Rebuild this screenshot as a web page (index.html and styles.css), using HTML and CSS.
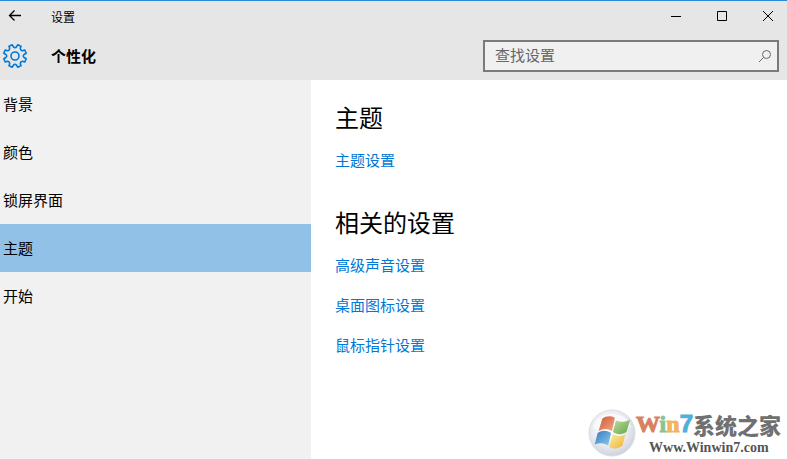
FILE: index.html
```html
<!DOCTYPE html>
<html lang="zh-CN">
<head>
<meta charset="utf-8">
<title>设置</title>
<link rel="stylesheet" href="styles.css">
</head>
<body>
<header class="top">
  <div class="titlebar">
    <button class="back" type="button" aria-label="返回">
      <svg width="14" height="12" viewBox="0 0 14 12"><path d="M13 5.5H1.5M6.5 .5L1.5 5.5L6.5 10.5"/></svg>
    </button>
    <span class="window-title">设置</span>
    <div class="controls">
      <button type="button" aria-label="最小化"><svg width="12" height="12" viewBox="0 0 12 12"><path d="M1 6.5H11"/></svg></button>
      <button type="button" aria-label="最大化"><svg width="12" height="12" viewBox="0 0 12 12"><path d="M1.5 1.5H10.5V10.5H1.5Z"/></svg></button>
      <button type="button" aria-label="关闭"><svg width="12" height="12" viewBox="0 0 12 12"><path d="M1 1L11 11M11 1L1 11"/></svg></button>
    </div>
  </div>
  <div class="page-header">
    <svg class="gear" width="26" height="26" viewBox="-13 -13 26 26">
      <path d="M1.5-9.1L2.7-11.2L6-9.8L5.3-7.5Q5.5-5.5 7.5-5.3L9.8-6L11.2-2.7L9.1-1.5Q7.4 0 9.1 1.5L11.2 2.7L9.8 6L7.5 5.3Q5.5 5.5 5.3 7.5L6 9.8L2.7 11.2L1.5 9.1Q0 7.4-1.5 9.1L-2.7 11.2L-6 9.8L-5.3 7.5Q-5.5 5.5-7.5 5.3L-9.8 6L-11.2 2.7L-9.1 1.5Q-7.4 0-9.1-1.5L-11.2-2.7L-9.8-6L-7.5-5.3Q-5.5-5.5-5.3-7.5L-6-9.8L-2.7-11.2L-1.5-9.1Q0-7.4 1.5-9.1Z"/>
      <circle r="4"/>
    </svg>
    <h1>个性化</h1>
    <form class="search">
      <input type="text" placeholder="查找设置" aria-label="查找设置">
      <button type="button" aria-label="搜索"><svg width="14" height="14" viewBox="0 0 14 14"><circle cx="8.5" cy="5.5" r="4"/><path d="M5.5 8.5L1 13"/></svg></button>
    </form>
  </div>
</header>
<div class="body">
  <nav class="sidebar">
    <a href="#">背景</a>
    <a href="#">颜色</a>
    <a href="#">锁屏界面</a>
    <a href="#" class="active" aria-current="page">主题</a>
    <a href="#">开始</a>
  </nav>
  <main class="content">
    <section>
      <h2>主题</h2>
      <a href="#">主题设置</a>
    </section>
    <section>
      <h2>相关的设置</h2>
      <a href="#">高级声音设置</a>
      <a href="#">桌面图标设置</a>
      <a href="#">鼠标指针设置</a>
    </section>
  </main>
</div>
<div class="watermark">
  <svg width="48" height="48" viewBox="0 0 50 50">
    <defs>
      <radialGradient id="orb" cx=".45" cy=".4" r=".6"><stop offset="0" stop-color="#fff"/><stop offset=".6" stop-color="#eceef2"/><stop offset="1" stop-color="#ced3dc"/></radialGradient>
      <linearGradient id="red" x2="1" y2="1"><stop offset="0" stop-color="#cf5838"/><stop offset="1" stop-color="#f4a884"/></linearGradient>
      <linearGradient id="green" x2="1" y2="1"><stop offset="0" stop-color="#c2dca0"/><stop offset="1" stop-color="#60a545"/></linearGradient>
      <linearGradient id="blue" x2="1" y2="1"><stop offset="0" stop-color="#3a78bc"/><stop offset="1" stop-color="#88ccf0"/></linearGradient>
      <linearGradient id="yellow" x2="1" y2="1"><stop offset="0" stop-color="#fff09a"/><stop offset="1" stop-color="#e9b040"/></linearGradient>
    </defs>
    <circle cx="25" cy="25" r="24" fill="url(#orb)" stroke="#d8dce4"/>
    <path fill="#fff" opacity=".6" d="M5 20C8 0 42 0 45 20C32 13 18 28 5 20Z"/>
    <path fill="url(#red)" d="M15 10C19 7 24 7 28 9L25 23C20 20 16 20 11 23Z"/>
    <path fill="url(#green)" d="M29 12C34 14 39 14 44 11L40 24C35 27 31 27 26 24Z"/>
    <path fill="url(#blue)" d="M10 25C15 22 19 22 24 25L21 38C16 35 12 35 7 37Z"/>
    <path fill="url(#yellow)" d="M26 26C31 29 35 29 39 26L36 38C31 42 26 42 22 39Z"/>
  </svg>
  <div class="brand">
    <div class="brand-name"><span class="latin"><span class="w">W</span><span class="i">i</span><span class="n">n</span><span class="seven">7</span></span><span class="cn">系统之家</span></div>
    <div class="brand-url">Www.Winwin7.com</div>
  </div>
</div>
</body>
</html>
```
FILE: styles.css
```css
* { box-sizing: border-box; }

body {
  margin: 0;
  min-height: 100vh;
  display: flex;
  flex-direction: column;
  position: relative;
  font-family: "Noto Sans CJK SC", sans-serif;
  font-size: 15px;
  color: #000;
  background: #fff;
}

button {
  display: flex;
  align-items: center;
  justify-content: center;
  padding: 0;
  border: 0;
  background: none;
}

svg { flex: none; }
button svg { fill: none; stroke: #000; }

.top {
  background: #e6e6e6;
  border-top: 1px solid #2d89d3;
}

.titlebar {
  display: flex;
  align-items: center;
  height: 30px;
}

.back { width: 30px; height: 30px; }
.back svg { stroke-width: 1.3; }

.window-title {
  margin-left: 21px;
  font-size: 12px;
}

.controls {
  display: flex;
  gap: 16px;
  margin-left: auto;
  padding-right: 4px;
}

.controls button { width: 30px; height: 30px; }

.page-header {
  display: flex;
  align-items: center;
  height: 49px;
  padding: 0 8px 0 2px;
}

.gear {
  fill: none;
  stroke: #0078d7;
  stroke-width: 1.6;
  stroke-linejoin: round;
}

h1 {
  margin: 0 0 0 23px;
  font-size: 15px;
  font-weight: 700;
  line-height: 22px;
}

.search {
  display: flex;
  width: 296px;
  height: 32px;
  margin-left: auto;
  border: 2px solid #7a7a7a;
  background: #f0f0f0;
}

.search input {
  flex: 1;
  min-width: 0;
  padding: 0 10px 2px;
  border: 0;
  outline: 0;
  background: none;
  font: inherit;
}

.search input::placeholder { color: #666; opacity: 1; }
.search button { width: 24px; }
.search button svg { stroke: #666; }

.body {
  display: flex;
  flex: 1;
}

.sidebar {
  flex: none;
  width: 311px;
  background: #f1f1f1;
}

.sidebar a {
  display: block;
  padding-left: 3px;
  line-height: 48px;
  color: #000;
  text-decoration: none;
}

.sidebar .active { background: #91c1e7; }

.content {
  flex: 1;
  padding: 21px 24px;
}

section + section { margin-top: 26px; }

h2 {
  margin: 0 0 7px;
  font-size: 24px;
  font-weight: 400;
  line-height: 32px;
}

section a {
  display: block;
  width: fit-content;
  line-height: 40px;
  color: #0078d7;
  text-decoration: none;
}

.watermark {
  position: absolute;
  right: 6px;
  bottom: 2px;
  display: flex;
  align-items: center;
}

.brand-name {
  display: flex;
  align-items: center;
  height: 28px;
}

.latin {
  font: 700 24px/28px "Liberation Serif", serif;
  -webkit-text-stroke: 1px currentColor;
}

.w { color: #d9805f; }
.i { color: #86c497; }
.n { color: #f0b55c; }
.seven { color: #4fb0dc; font-family: "Liberation Sans", sans-serif; }

.cn {
  font-size: 22px;
  font-weight: 900;
  line-height: 24px;
  color: #707070;
}

.brand-url {
  padding: 2px 0 0 13px;
  font: 700 14px/16px "Liberation Serif", serif;
  color: #555;
}
```
